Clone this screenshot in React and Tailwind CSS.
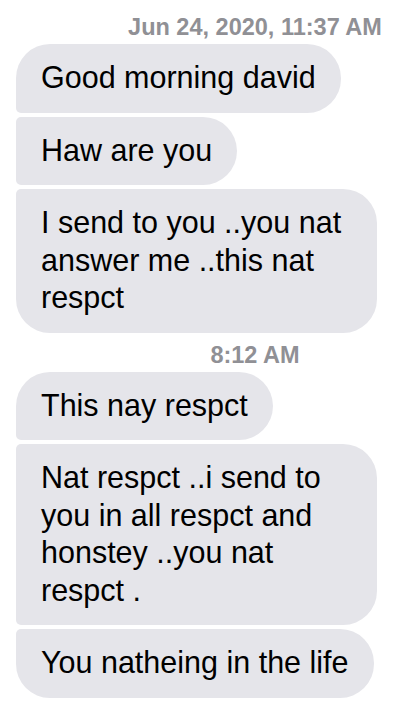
import React from 'react';

// grouped incoming messages, iMessage style
const groups = [
    {
        stamp: 'Jun 24, 2020, 11:37 AM',
        messages: [
            'Good morning david',
            'Haw are you',
            'I send to you ..you nat answer me ..this nat respct',
        ],
    },
    {
        stamp: '8:12 AM',
        messages: [
            'This nay respct',
            'Nat respct ..i send to you in all respct and honstey ..you nat respct .',
            'You natheing in the life',
        ],
    },
];

const cornerClass = (index, count) => {
    if (count === 1) return 'rounded-[34px]';
    if (index === 0) return 'rounded-[34px] rounded-bl-[5px]';
    if (index === count - 1) return 'rounded-[34px] rounded-tl-[5px]';
    return 'rounded-[34px] rounded-l-[5px]';
};

const Bubble = ({ text, index, count }) => (
    <div
        className={`w-fit max-w-[361px] bg-[#e5e5ea] text-black px-[25px] pt-[15px] pb-[16px] text-[30.5px] leading-[37.5px] ${cornerClass(index, count)}`}
    >
        {text}
    </div>
);

export default function App() {
    return (
        <div
            className="w-[414px] h-[704px] bg-white overflow-hidden pt-[13px]"
            style={{ fontFamily: '"Liberation Sans", Arial, sans-serif' }}
        >
            {groups.map((group, g) => (
                <div key={g} className={g > 0 ? 'mt-[8px]' : ''}>
                    <div className="flex justify-center pl-[96px] text-[23.5px] leading-[28px] font-semibold text-[#909095]">
                        {group.stamp}
                    </div>
                    <div className="flex flex-col gap-[4px] pl-4 mt-[3px]">
                        {group.messages.map((m, i) => (
                            <Bubble key={i} text={m} index={i} count={group.messages.length} />
                        ))}
                    </div>
                </div>
            ))}
        </div>
    );
}
